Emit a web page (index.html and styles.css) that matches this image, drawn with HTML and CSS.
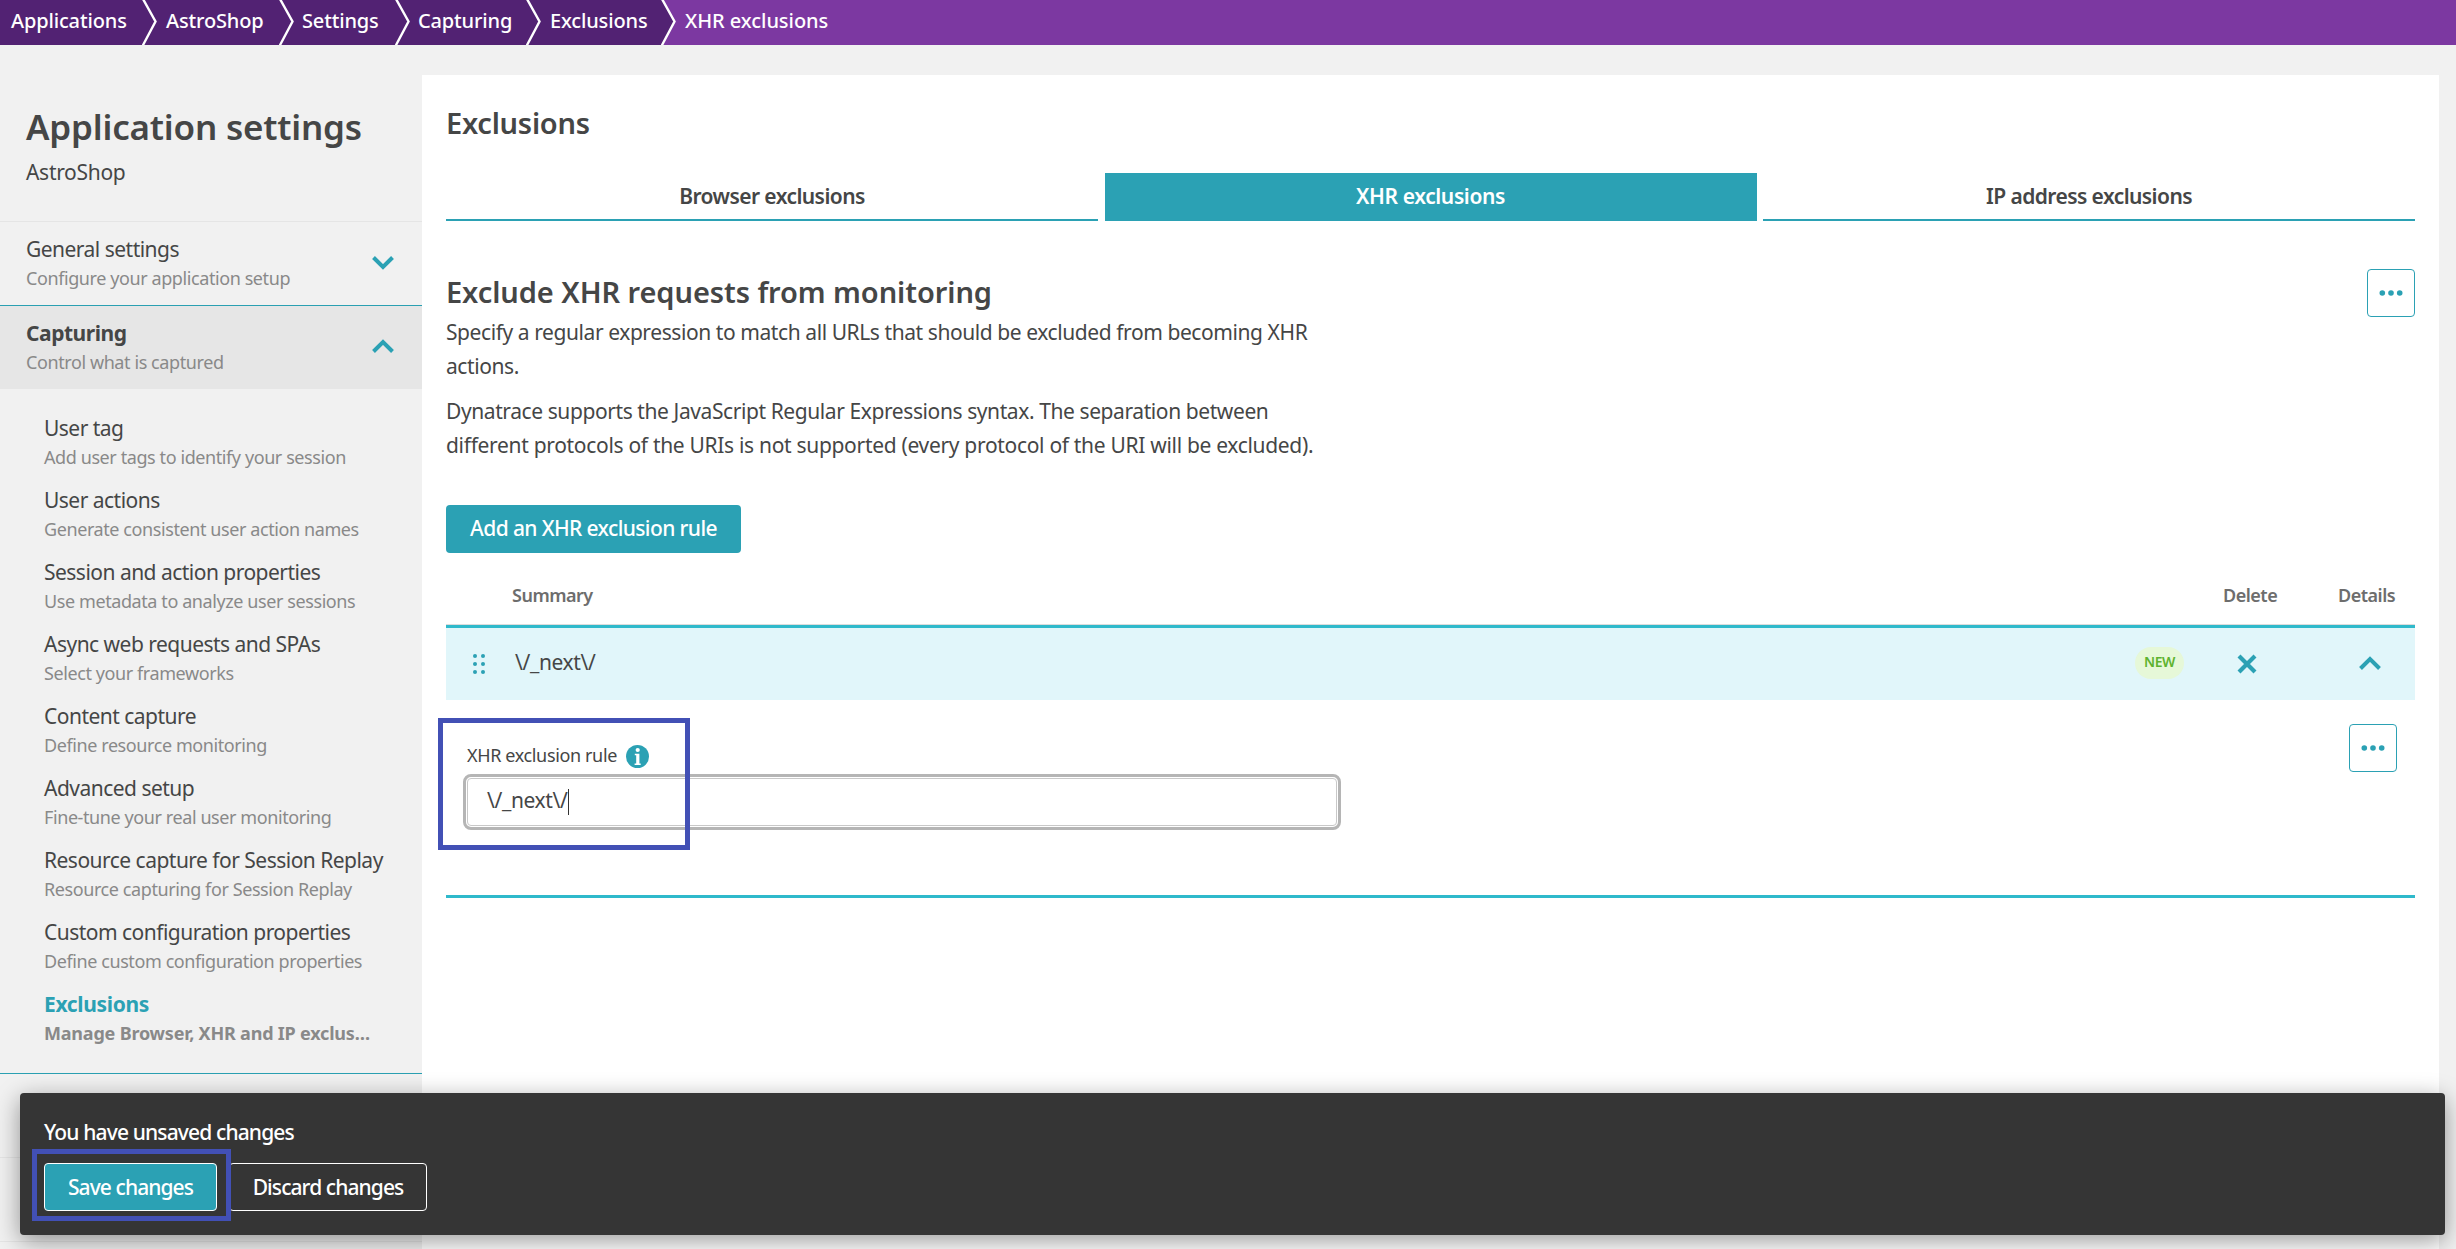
FILE: index.html
```html
<!DOCTYPE html>
<html lang="en">
<head>
<meta charset="utf-8">
<title>XHR exclusions</title>
<link rel="stylesheet" href="styles.css">
</head>
<body>
<nav class="crumbs">
  <a class="crumb">Applications<svg class="sep" viewBox="0 0 16 45"><path class="sep-fill" d="M0 0H1L13.5 21.5L1 45H0Z"/><path class="sep-line" d="M1 -1L13.5 21.5L0.5 46"/></svg></a>
  <a class="crumb">AstroShop<svg class="sep" viewBox="0 0 16 45"><path class="sep-fill" d="M0 0H1L13.5 21.5L1 45H0Z"/><path class="sep-line" d="M1 -1L13.5 21.5L0.5 46"/></svg></a>
  <a class="crumb">Settings<svg class="sep" viewBox="0 0 16 45"><path class="sep-fill" d="M0 0H1L13.5 21.5L1 45H0Z"/><path class="sep-line" d="M1 -1L13.5 21.5L0.5 46"/></svg></a>
  <a class="crumb">Capturing<svg class="sep" viewBox="0 0 16 45"><path class="sep-fill" d="M0 0H1L13.5 21.5L1 45H0Z"/><path class="sep-line" d="M1 -1L13.5 21.5L0.5 46"/></svg></a>
  <a class="crumb">Exclusions<svg class="sep" viewBox="0 0 16 45"><path class="sep-fill" d="M0 0H1L13.5 21.5L1 45H0Z"/><path class="sep-line" d="M1 -1L13.5 21.5L0.5 46"/></svg></a>
  <span class="crumb current">XHR exclusions</span>
</nav>
<div class="layout">
  <aside class="sidebar">
    <header class="side-head">
      <h1>Application settings</h1>
      <p>AstroShop</p>
    </header>
    <section class="group">
      <div><div class="title">General settings</div><div class="sub">Configure your application setup</div></div>
      <svg class="chevron" viewBox="0 0 22 14"><path d="M1.5 1.5L11 11L20.500 1.500"/></svg>
    </section>
    <section class="group open">
      <div><div class="title">Capturing</div><div class="sub">Control what is captured</div></div>
      <svg class="chevron" viewBox="0 0 22 14"><path d="M1.500 12.500L11 3L20.500 12.500"/></svg>
    </section>
    <ul class="menu">
      <li><div class="title">User tag</div><div class="sub">Add user tags to identify your session</div></li>
      <li><div class="title">User actions</div><div class="sub">Generate consistent user action names</div></li>
      <li><div class="title">Session and action properties</div><div class="sub">Use metadata to analyze user sessions</div></li>
      <li><div class="title">Async web requests and SPAs</div><div class="sub">Select your frameworks</div></li>
      <li><div class="title">Content capture</div><div class="sub">Define resource monitoring</div></li>
      <li><div class="title">Advanced setup</div><div class="sub">Fine-tune your real user monitoring</div></li>
      <li><div class="title">Resource capture for Session Replay</div><div class="sub">Resource capturing for Session Replay</div></li>
      <li><div class="title">Custom configuration properties</div><div class="sub">Define custom configuration properties</div></li>
      <li class="active"><div class="title">Exclusions</div><div class="sub">Manage Browser, XHR and IP exclus…</div></li>
    </ul>
    <div class="rest"></div>
    <div class="rest"></div>
  </aside>
  <main class="panel">
    <h2>Exclusions</h2>
    <div class="tabs">
      <div class="tab">Browser exclusions</div>
      <div class="tab selected">XHR exclusions</div>
      <div class="tab">IP address exclusions</div>
    </div>
    <div class="intro">
      <div>
        <h3>Exclude XHR requests from monitoring</h3>
        <p class="p1">Specify a regular expression to match all URLs that should be excluded from becoming XHR<br>actions.</p>
        <p class="p2"><span>Dynatrace supports the JavaScript Regular Expressions syntax. The separation between</span><br>different protocols of the URIs is not supported (every protocol of the URI will be excluded).</p>
      </div>
      <button class="more"><svg viewBox="0 0 24 6"><circle cx="3.300" cy="3" r="2.800"/><circle cx="12" cy="3" r="2.800"/><circle cx="20.700" cy="3" r="2.800"/></svg></button>
    </div>
    <button class="add">Add an XHR exclusion rule</button>
    <div class="thead"><span>Summary</span><span>Delete</span><span>Details</span></div>
    <div class="row">
      <svg class="drag" viewBox="0 0 12 20"><circle cx="2" cy="2" r="2"/><circle cx="10" cy="2" r="2"/><circle cx="2" cy="10" r="2"/><circle cx="10" cy="10" r="2"/><circle cx="2" cy="18" r="2"/><circle cx="10" cy="18" r="2"/></svg>
      <span class="regex">\/_next\/</span>
      <span class="badge">NEW</span>
      <svg class="delete" viewBox="0 0 20 20"><path d="M2 2L18 18M18 2L2 18"/></svg>
      <svg class="chevron" viewBox="0 0 22 14"><path d="M1.500 12.500L11 3L20.500 12.500"/></svg>
    </div>
    <div class="details">
      <div class="field">
        <div class="label">XHR exclusion rule
          <svg class="info" viewBox="0 0 23 23"><circle cx="11.500" cy="11.500" r="11.500"/><path d="M8.800 8.700H13.400V18.400H14.700V20H8.600V18.400H10.200V10.300H8.800Z"/><circle class="dot" cx="11.700" cy="5" r="2.100"/></svg>
        </div>
        <div class="input"><span>\/_next\/</span><i class="caret"></i></div>
        <div class="mark mark-field"></div>
      </div>
      <button class="more"><svg viewBox="0 0 24 6"><circle cx="3.300" cy="3" r="2.800"/><circle cx="12" cy="3" r="2.800"/><circle cx="20.700" cy="3" r="2.800"/></svg></button>
    </div>
  </main>
</div>
<div class="savebar">
  <p>You have unsaved changes</p>
  <div class="actions">
    <button class="save">Save changes</button>
    <button class="discard">Discard changes</button>
  </div>
  <div class="mark mark-save"></div>
</div>
</body>
</html>
```
FILE: styles.css
```css
* { box-sizing: border-box; }
body {
  margin: 0;
  height: 1249px;
  overflow: hidden;
  background: #f1f1f1;
  color: #454646;
  font: 21px/30px "Noto Sans", sans-serif;
  position: relative;
}
h1, h2, h3, p, ul { margin: 0; padding: 0; }
button { font: inherit; padding: 0; background: none; border: 0; }
svg { display: block; flex: none; }
span, button, .title, .sub, .tab { white-space: nowrap; }

.crumbs { display: flex; height: 45px; background: #7c38a1; color: #fff; }
.crumb {
  position: relative;
  padding-left: 24px;
  background: #522273;
  font-size: 20px;
  font-weight: 500;
  line-height: 41px;
  letter-spacing: -0.15px;
}
.crumb:nth-child(1) { width: 142px; padding-left: 11px; }
.crumb:nth-child(2) { width: 137px; }
.crumb:nth-child(3) { width: 116px; padding-left: 23px; }
.crumb:nth-child(4) { width: 131px; padding-left: 23px; }
.crumb:nth-child(5) { width: 135px; }
.crumb.current { background: none; letter-spacing: -0.05px; }
.sep { position: absolute; left: 100%; top: 0; width: 16px; height: 45px; z-index: 1; }
.sep-fill { fill: #522273; }
.sep-line { fill: none; stroke: #fff; stroke-width: 2.4; }

.layout { display: flex; height: 1204px; }
.sidebar { width: 422px; flex: none; }
.side-head { height: 177px; padding: 56px 0 0 26px; border-bottom: 1px solid #e5e5e5; }
h1 { font-size: 35px; line-height: 52px; font-weight: 600; letter-spacing: -0.2px; }
.side-head p { margin-top: 4px; letter-spacing: -0.3px; }
.title { line-height: 30px; letter-spacing: -0.52px; }
.sub { margin-top: 1px; font-size: 18px; line-height: 26px; letter-spacing: -0.41px; color: #898989; }
.group {
  display: flex;
  justify-content: space-between;
  height: 84px;
  padding: 12px 28px 0 26px;
  border-bottom: 1px solid #2aa0b2;
}
.group .chevron { margin-top: 22px; }
.group.open { background: #e6e6e6; border: 0; height: 83px; }
.open .title { font-weight: 700; letter-spacing: -0.46px; }
.open .chevron { margin-top: 21px; }
.chevron { width: 22px; height: 14px; fill: none; stroke: #2ba1b4; stroke-width: 4; }
.menu { list-style: none; height: 685px; padding: 24px 0 0 44px; border-bottom: 1px solid #2aa0b2; }
.menu li { height: 72px; }
.menu .active { font-weight: 700; }
.active .title { color: #2ba1b4; letter-spacing: -0.33px; }
.active .sub { letter-spacing: -0.2px; }
.rest { height: 84px; border-bottom: 1px solid #e5e5e5; }

.panel { width: 2017px; margin-top: 30px; padding: 28px 24px 0; background: #fff; }
h2 { font-size: 29px; line-height: 40px; font-weight: 600; letter-spacing: -0.25px; }
.tabs { display: grid; grid-template-columns: repeat(3, 1fr); gap: 6.500px; margin-top: 30px; }
.tab { height: 48px; line-height: 46px; text-align: center; font-weight: 600; letter-spacing: -0.57px; border-bottom: 2px solid #2ba1b4; }
.tab.selected { background: #2ba1b4; color: #fff; letter-spacing: -0.39px; }
.intro { display: flex; justify-content: space-between; margin-top: 48px; height: 236px; }
h3 { margin-top: 3px; font-size: 29px; line-height: 40px; font-weight: 600; letter-spacing: -0.07px; }
.intro p { line-height: 33.600px; white-space: nowrap; }
.p1 { margin-top: 4px; letter-spacing: -0.42px; }
.p2 { margin-top: 12px; letter-spacing: -0.31px; }
.p2 span { letter-spacing: -0.41px; }
.more { width: 48px; height: 48px; border: 1px solid #2ba1b4; border-radius: 4px; display: flex; align-items: center; justify-content: center; }
.more svg { width: 24px; height: 6px; fill: #2ba1b4; }
.add { display: block; width: 295px; height: 48px; background: #2ba1b4; border-radius: 4px; color: #fff; font-weight: 500; letter-spacing: -0.61px; line-height: 45px; padding-bottom: 1px; }
.thead {
  display: grid;
  grid-template-columns: 1711px 115px auto;
  height: 72px;
  padding: 29px 0 0 66px;
  border-bottom: 1px solid #dcdcdc;
  font-size: 18px;
  font-weight: 600;
  line-height: 26px;
  letter-spacing: -0.5px;
  color: #6d6d6d;
}
.row { display: flex; align-items: center; height: 75px; padding-left: 27px; border-top: 3px solid #2fb9cb; background: #e1f6fa; }
.drag { width: 12px; height: 20px; fill: #2ba1b4; }
.regex { width: 1620px; margin: -4px 0 0 30px; letter-spacing: -0.35px; }
.badge { width: 49px; height: 32px; margin-top: -2px; border-radius: 16px; background: #e6f8d8; color: #5eb32f; font-size: 14px; font-weight: 600; line-height: 30px; text-align: center; letter-spacing: -0.5px; }
.delete { width: 20px; height: 20px; margin-left: 53px; fill: none; stroke: #2ba1b4; stroke-width: 4.200; }
.row .chevron { margin: -2px 0 0 102px; }
.details { display: flex; justify-content: space-between; height: 198px; padding: 24px 18px 0 17px; border-bottom: 3px solid #2fb9cb; }
.field { position: relative; width: 878px; height: 106px; padding-top: 17px; }
.label { display: flex; gap: 9px; padding-left: 4px; height: 33px; font-size: 18px; line-height: 28px; letter-spacing: -0.36px; }
.info { width: 23px; height: 23px; margin-top: 4px; fill: #2ba1b4; }
.info path, .info .dot { fill: #fff; }
.input { display: flex; align-items: center; height: 56px; border: 3px solid #b5b5b5; border-radius: 8px; padding-left: 21px; position: relative; letter-spacing: -0.35px; }
.input::before { content: ""; position: absolute; inset: 1px; border: 1px solid #c8c8c8; border-radius: 4px; }
.input span { margin-top: -4px; }
.caret { width: 1px; height: 26px; background: #333; }
.mark { position: absolute; border: 5px solid #4250b5; }
.mark-field { left: -25px; top: -6px; width: 252px; height: 132px; }

.savebar { position: absolute; left: 20px; top: 1093px; width: 2425px; height: 142px; padding: 24px; border-radius: 4px; background: #353535; color: #fff; font-weight: 500; box-shadow: 0 6px 24px rgba(0, 0, 0, 0.4); }
.savebar p { letter-spacing: -0.86px; }
.actions { display: flex; gap: 12px; margin-top: 16px; }
.actions button { height: 48px; border: 1px solid #fff; border-radius: 4px; color: #fff; line-height: 44px; letter-spacing: -0.92px; padding-bottom: 1px; }
.save { width: 173px; background: #2ba1b4; }
.discard { width: 198px; }
.mark-save { left: 12px; top: 56px; width: 199px; height: 72px; }
```
